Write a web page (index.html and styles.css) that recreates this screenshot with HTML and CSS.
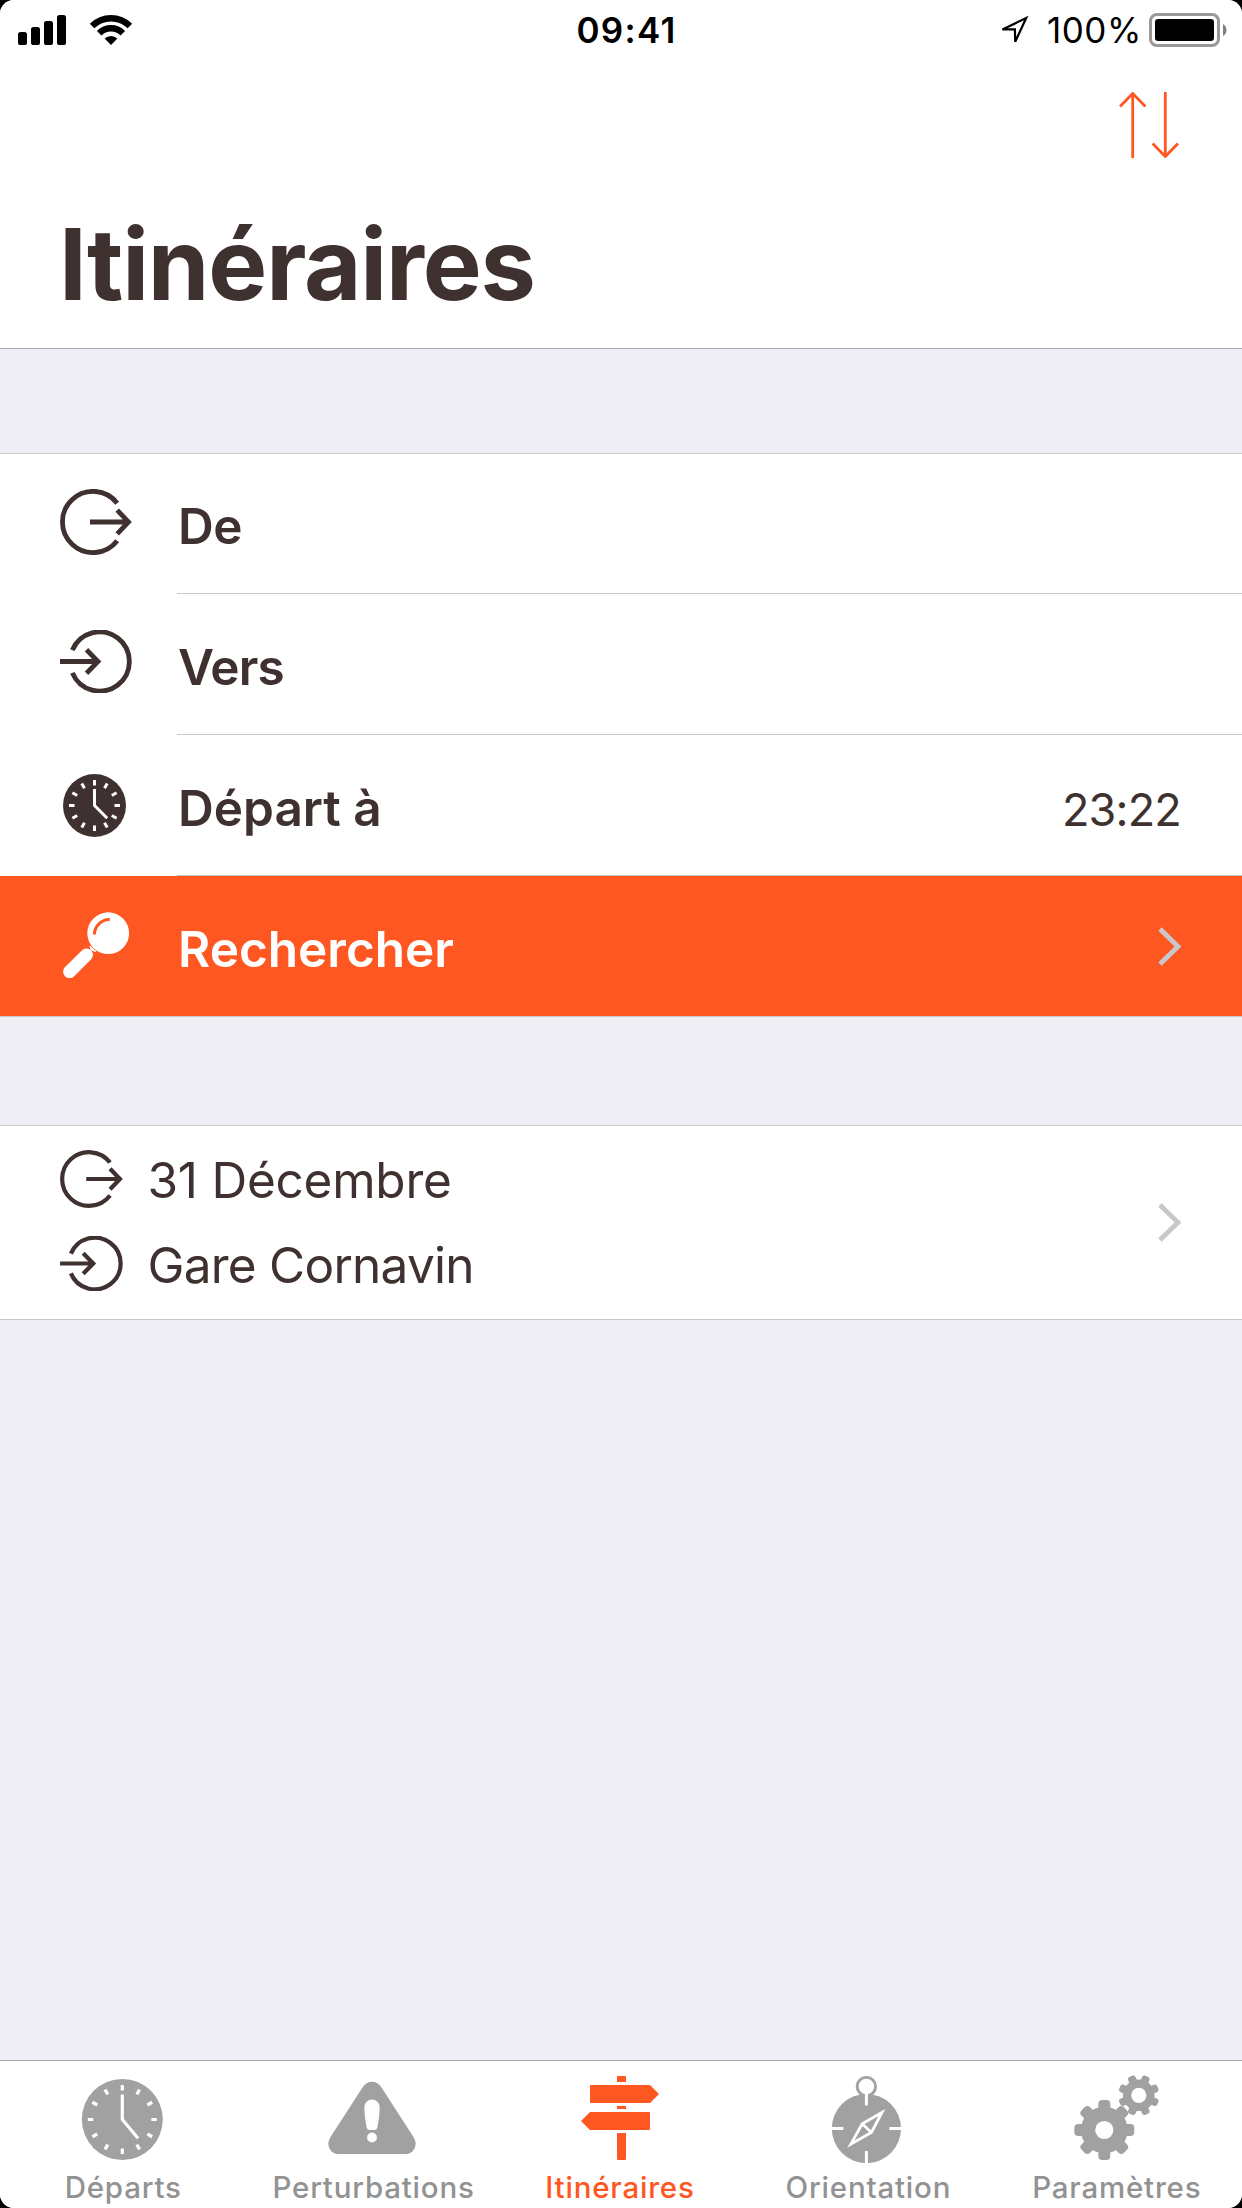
FILE: index.html
```html
<!DOCTYPE html>
<html lang="fr">
<head>
<meta charset="utf-8">
<title>Itinéraires</title>
<link rel="stylesheet" href="styles.css">
</head>
<body>
<svg class="symbols" aria-hidden="true">
  <symbol id="icon-from" viewBox="0 0 72 66">
    <path d="M57.2 14.2A30.6 30.6 0 1 0 57.2 51.8M30 33H68M57.2 21.2L68.5 33L57.2 44.8" fill="none" stroke="currentColor" stroke-width="4.8"/>
  </symbol>
  <symbol id="icon-to" viewBox="0 0 72 63">
    <path d="M12.4 20.2A29.6 29.6 0 1 1 12.4 42.8M0 31.5H38M26.5 19.8L38 31.5L26.5 43.2" fill="none" stroke="currentColor" stroke-width="4.8"/>
  </symbol>
  <symbol id="icon-chevron" viewBox="0 0 24 39">
    <path d="M2 2L20 19.5L2 37" fill="none" stroke="#c7c7cc" stroke-width="4.8"/>
  </symbol>
</svg>
<div class="screen">
  <header class="header">
    <div class="status">
      <div class="status-left">
        <svg width="48" height="30" viewBox="0 0 48 30"><rect y="17" width="9" height="13" rx="2.6"/><rect x="13" y="12" width="9" height="18" rx="2.6"/><rect x="26" y="6" width="9" height="24" rx="2.6"/><rect x="39" width="9" height="30" rx="2.6"/></svg>
        <svg width="44" height="30" viewBox="0 0 44 30"><path d="M22 30L15.6 23.6A9 9 0 0 1 28.4 23.6Z"/><g fill="none" stroke="#000" stroke-width="6.4"><path d="M10.2 18.2A16.7 16.7 0 0 1 33.8 18.2M3.1 11.1A26.8 26.8 0 0 1 40.9 11.1"/></g></svg>
      </div>
      <div class="time">09:41</div>
      <div class="status-right">
        <svg width="30" height="30" viewBox="0 0 30 30"><path d="M27.2 3L3.4 14.4H15.9L16.2 26.8Z" fill="none" stroke="#000" stroke-width="2.2"/></svg>
        <span class="percent">100%</span>
        <svg width="78" height="34" viewBox="0 0 78 34"><rect x="1.5" y="1.5" width="68" height="31" rx="6.5" fill="none" stroke="#999" stroke-width="3"/><rect x="6" y="6" width="59" height="22" rx="3.2"/><path d="M74 11Q77.5 13 77.5 17T74 23Z" fill="#808080"/></svg>
      </div>
    </div>
    <div class="toolbar">
      <svg width="60" height="66" viewBox="0 0 60 66" fill="none" stroke="#ff5722" stroke-width="2.8"><path d="M13.7 66V2M46.3 0V64"/><path d="M1 14.5L13.7 1.5L26.4 14.5M33.6 51.5L46.3 64.5L59 51.5"/></svg>
    </div>
    <h1 class="title">Itinéraires</h1>
  </header>

  <main class="content">
    <section class="group form">
      <div class="row">
        <div class="row-icon"><svg width="72" height="66"><use href="#icon-from"/></svg></div>
        <div class="row-body"><span class="label label-from">De</span></div>
      </div>
      <div class="row">
        <div class="row-icon lift"><svg width="72" height="63"><use href="#icon-to"/></svg></div>
        <div class="row-body"><span class="label label-to">Vers</span></div>
      </div>
      <div class="row">
        <div class="row-icon row-icon-clock">
          <svg width="63" height="63" viewBox="-31.5 -31.5 63 63"><circle r="31.5" fill="currentColor"/>
            <g stroke="#fff" stroke-width="3" fill="none"><path d="M0-25.5V-20M0 25.5V20M-25.5 0H-20M25.5 0H20M12.75-22.1L10-17.3M22.1-12.75L17.3-10M22.1 12.75L17.3 10M12.75 22.1L10 17.3M-12.75 22.1L-10 17.3M-22.1 12.75L-17.3 10M-22.1-12.75L-17.3-10M-12.75-22.1L-10-17.3"/><path d="M0-16.5V0L12.7 12.7"/></g></svg>
        </div>
        <div class="row-body"><span class="label">Départ à</span><span class="value">23:22</span></div>
      </div>
      <div class="row search">
        <div class="row-icon row-icon-search">
          <svg width="66" height="66" viewBox="0 0 66 66"><circle cx="45.2" cy="21.2" r="20.9" fill="#fff"/><path d="M27 34L33 39.5L28 38Z" fill="#fff" stroke="#fff"/><path d="M31.4 22.6A15 15 0 0 1 46.8 7.6" fill="none" stroke="#ff5722" stroke-width="3"/><path d="M6.6 59.6L23.4 43" stroke="#fff" stroke-width="13" stroke-linecap="round"/></svg>
        </div>
        <div class="row-body"><span class="label">Rechercher</span><svg class="chevron" width="24" height="39"><use href="#icon-chevron"/></svg></div>
      </div>
    </section>

    <section class="group recent">
      <div class="journey">
        <div class="stop"><svg width="63" height="58"><use href="#icon-from"/></svg><span>31 Décembre</span></div>
        <div class="stop stop-to"><svg width="63" height="55"><use href="#icon-to"/></svg><span>Gare Cornavin</span></div>
      </div>
      <svg class="chevron" width="24" height="39"><use href="#icon-chevron"/></svg>
    </section>
  </main>

  <nav class="tabs">
    <a class="tab">
      <svg width="96" height="90" viewBox="0 0 96 90"><g transform="translate(46.3 46.5)"><circle r="40.5" fill="#a1a1a1"/><g stroke="#fff" stroke-width="3.2" fill="none"><path d="M0-34.5V-29M0 34.5V29M-34.5 0H-29M34.5 0H29M17.25-29.9L14.5-25.1M29.9-17.25L25.1-14.5M29.9 17.25L25.1 14.5M17.25 29.9L14.5 25.1M-17.25 29.9L-14.5 25.1M-29.9 17.25L-25.1 14.5M-29.9-17.25L-25.1-14.5M-17.25-29.9L-14.5-25.1"/><path d="M0-25V0L15.7 18.8"/></g></g></svg>
      <span>Départs</span>
    </a>
    <a class="tab tab-alerts">
      <svg width="96" height="90" viewBox="0 0 96 90"><path d="M37.5 14.6Q41 8.7 47 8.7T56.5 14.6L88.8 64.5Q92 70 89.7 75Q87 81 80.5 81H13.5Q7 81 4.3 75Q2 70 5.2 64.5Z" fill="#a1a1a1"/><path d="M39.3 34.2a7.7 7.7 0 0 1 15.4 0Q54.7 44 52.3 54.5Q51.7 57 49.5 57H44.5Q42.3 57 41.7 54.5Q39.3 44 39.3 34.2Z" fill="#fff"/><circle cx="47" cy="64.5" r="4.9" fill="#fff"/></svg>
      <span>Perturbations</span>
    </a>
    <a class="tab active">
      <svg width="96" height="90" viewBox="0 0 96 90" fill="#ff5722"><path d="M44 4q0-1 1-1h7q1 0 1 1v5H44ZM44 33H53V36H44ZM44 60H53V86q0 1-1 1h-7q-1 0-1-1ZM17 13q0-1 1-1H77L86 21L77 30H18q-1 0-1-1ZM77 56q0 1-1 1H17L8 48L17 39H76q1 0 1 1Z"/></svg>
      <span>Itinéraires</span>
    </a>
    <a class="tab">
      <svg width="96" height="90" viewBox="0 0 96 90"><g transform="translate(45.4 0)"><circle cy="55.5" r="34.6" fill="#a1a1a1"/><circle cy="13.5" r="9.2" fill="#fff" stroke="#a1a1a1" stroke-width="2.8"/><g fill="none" stroke="#fff" stroke-width="3"><path d="M0 19V32.5M0 78V91M-35 55.5H-23M23 55.5H35"/><path d="M15.5 39.5L-4.2 50.8L-15.5 71L5 59.5ZM-4.2 50.8L5 59.5" stroke-width="2.8"/></g></g></svg>
      <span>Orientation</span>
    </a>
    <a class="tab">
      <svg width="96" height="90" viewBox="0 0 96 90" fill="#a1a1a1"><defs><g id="tooth"><rect x="-6" y="-30" width="12" height="60" rx="4"/></g><g id="cog"><rect x="-4" y="-20.6" width="8" height="41.2" rx="2.8"/></g></defs>
        <g transform="translate(34.3 57)"><circle r="23.4"/><use href="#tooth"/><use href="#tooth" transform="rotate(45)"/><use href="#tooth" transform="rotate(90)"/><use href="#tooth" transform="rotate(135)"/><circle r="9.1" fill="#fff"/></g>
        <g transform="translate(68.8 22.3)"><circle r="15.8"/><use href="#cog" transform="rotate(22.5)"/><use href="#cog" transform="rotate(67.5)"/><use href="#cog" transform="rotate(112.5)"/><use href="#cog" transform="rotate(157.5)"/><circle r="7.6" fill="#fff"/></g></svg>
      <span>Paramètres</span>
    </a>
  </nav>
</div>
</body>
</html>
```
FILE: styles.css
```css
* { box-sizing: border-box; }
body {
  margin: 0;
  background: #000;
  color: #3e312f;
  font-family: Inter, "Liberation Sans", sans-serif;
}
svg { display: block; flex: none; }
.symbols { width: 0; height: 0; position: absolute; }

.screen {
  width: 1242px;
  height: 2208px;
  display: flex;
  flex-direction: column;
  background: #efeef4;
  border-radius: 14px;
  overflow: hidden;
}

/* Header */
.header {
  height: 349px;
  background: #fff;
  border-bottom: 1px solid #a7a6ab;
}
.status {
  height: 60px;
  display: grid;
  grid-template-columns: 1fr auto 1fr;
  align-items: center;
  padding: 0 15px 0 18px;
  color: #000;
}
.status-left { display: flex; gap: 23px; }
.time {
  padding: 0 0 0 8px;
  font-size: 35px;
  font-weight: 600;
  line-height: 60px;
  letter-spacing: 1.3px;
}
.status-right { display: flex; align-items: center; justify-content: flex-end; }
.percent {
  width: 102px;
  margin-left: 18px;
  font-size: 35px;
  line-height: 60px;
  letter-spacing: .5px;
}
.toolbar {
  height: 120px;
  display: flex;
  justify-content: flex-end;
  padding: 32px 63px 0 0;
}
.title {
  margin: 24px 0 0 59px;
  font-size: 99px;
  font-weight: 700;
  line-height: 120px;
  letter-spacing: -1.16px;
}

/* Lists */
.content {
  flex: 1;
  display: flex;
  flex-direction: column;
  gap: 108px;
  padding-top: 104px;
}
.group {
  background: #fff;
  border-top: 1px solid #c8c7cc;
}
.row { display: flex; height: 141px; }
.row:first-child { height: 140px; }
.row-icon {
  width: 177px;
  display: flex;
  align-items: center;
  padding: 0 0 4px 60px;
}
.row-icon.lift { padding-bottom: 6px; }
.row-icon-clock { padding: 0 0 0 63px; }
.row-icon-search { padding: 0 0 3px 63px; }
.row-body {
  flex: 1;
  display: flex;
  align-items: center;
  justify-content: space-between;
  padding-right: 60px;
  border-bottom: 1px solid #c8c7cc;
}
.label {
  padding: 6px 0 0 1px;
  font-size: 49.5px;
  font-weight: 600;
  line-height: 60px;
}
.label-from { padding-top: 4px; letter-spacing: -.5px; }
.label-to { letter-spacing: -.9px; }
.value {
  padding: 10px 1px 0 0;
  font-size: 45px;
  line-height: 60px;
  letter-spacing: -.8px;
}
.search {
  background: #ff5722;
  border-bottom: 1px solid #c8c7cc;
  color: #fff;
}
.search .row-body { border-bottom: 0; }

.recent {
  height: 195px;
  display: flex;
  align-items: center;
  justify-content: space-between;
  padding: 0 60px;
  border-bottom: 1px solid #c8c7cc;
}
.stop {
  height: 85px;
  display: flex;
  align-items: center;
  gap: 24.5px;
  font-size: 49.5px;
  line-height: 85px;
  letter-spacing: -.23px;
}
.stop-to { letter-spacing: -.75px; }
.stop svg { margin-bottom: 3px; }

/* Tab bar */
.tabs {
  height: 148px;
  display: grid;
  grid-template-columns: repeat(5, 1fr);
  background: #fff;
  border-top: 1px solid #a7a6ab;
}
.tab {
  display: flex;
  flex-direction: column;
  align-items: center;
  padding-top: 12px;
  color: #929292;
  font-size: 29.5px;
  font-weight: 500;
  line-height: 36px;
  letter-spacing: .8px;
}
.tab span { margin-top: 6px; padding-right: 2px; }
.tab-alerts span { padding: 0 0 0 2px; }
.tab.active { color: #ff5722; }
```
